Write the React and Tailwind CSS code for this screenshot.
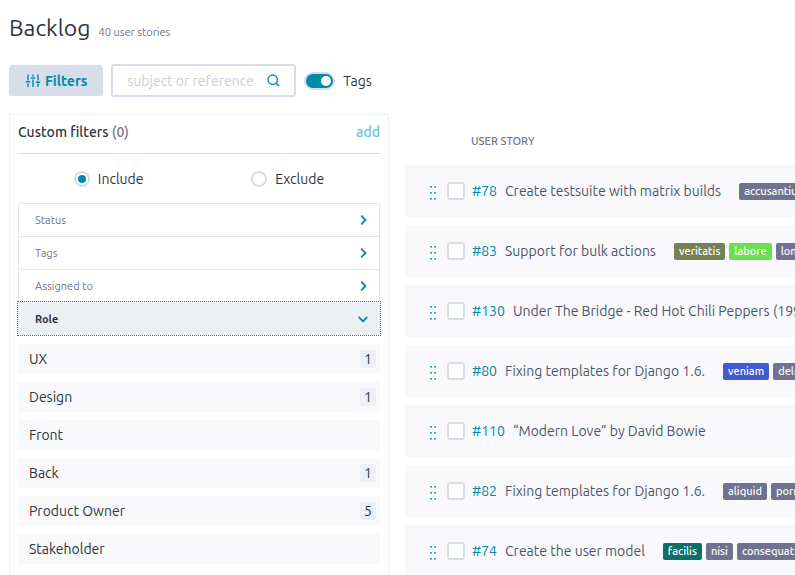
import { useState } from "react";

const GREY = "bg-[#70728f]";

const stories = [
  { id: 78, title: "Create testsuite with matrix builds", tags: [["accusantium", GREY]] },
  { id: 83, title: "Support for bulk actions", tags: [["veritatis", "bg-[#748253]"], ["labore", "bg-[#6ae14c]"], ["longum", GREY]] },
  { id: 130, title: "Under The Bridge - Red Hot Chili Peppers (1991)", tags: [] },
  { id: 80, title: "Fixing templates for Django 1.6.", tags: [["veniam", "bg-[#4159d1]"], ["delectus", GREY]] },
  { id: 110, title: "“Modern Love” by David Bowie", tags: [] },
  { id: 82, title: "Fixing templates for Django 1.6.", tags: [["aliquid", GREY], ["porro", GREY]] },
  { id: 74, title: "Create the user model", tags: [["facilis", "bg-[#0f6e66]"], ["nisi", GREY], ["consequatur", GREY]] },
];

const roles = [
  ["UX", 1],
  ["Design", 1],
  ["Front", 0],
  ["Back", 1],
  ["Product Owner", 5],
  ["Stakeholder", 0],
];

function SlidersIcon() {
  return (
    <svg className="h-4 w-4" viewBox="0 0 16 16" fill="none" stroke="currentColor" strokeWidth="1.4" aria-hidden="true">
      <path d="M3 1.500v6M3 10.500v3.500M.8 8.700h4.400M8 1.500v2M8 6.500v7.500M5.800 5h4.400M13 1.500v6M13 10.500v3.500M10.800 9.200h4.400" />
    </svg>
  );
}

function SearchIcon() {
  return (
    <svg className="h-[13px] w-[13px]" viewBox="0 0 13 13" fill="none" stroke="currentColor" strokeWidth="1.4" aria-hidden="true">
      <circle cx="5.700" cy="5.700" r="4.700" />
      <path d="M9 9l3 3" />
    </svg>
  );
}

function Chevron({ down }) {
  return (
    <svg className="h-3 w-3 text-[#008aa8]" viewBox="0 0 12 12" fill="none" stroke="currentColor" strokeWidth="1.8" aria-hidden="true">
      <path d={down ? "M1.700 4l4.300 4.300L10.300 4" : "M4.200 1.700L8.500 6l-4.300 4.300"} />
    </svg>
  );
}

function DragIcon() {
  return (
    <svg className="h-4 w-[7px] text-[#008aa8]" viewBox="0 0 7 16" fill="currentColor" aria-hidden="true">
      {[1, 7, 13].map((y) => (
        <g key={y}>
          <rect x="0.200" y={y} width="1.600" height="1.600" />
          <rect x="4.200" y={y} width="1.600" height="1.600" />
        </g>
      ))}
    </svg>
  );
}

function Radio({ label, checked, onChange }) {
  return (
    <label className="flex items-center gap-2">
      <input
        type="radio"
        name="mode"
        checked={checked}
        onChange={onChange}
        className="h-4 w-4 appearance-none rounded-full border-2 border-[#d8dee9] bg-white bg-clip-content p-0.5 checked:bg-[#008aa8]"
      />
      {label}
    </label>
  );
}

export default function App() {
  const [mode, setMode] = useState("include");
  const [showTags, setShowTags] = useState(true);

  return (
    <div className="h-screen overflow-hidden bg-white pl-[9px] font-['Ubuntu','Noto_Sans',sans-serif] text-sm text-[#2e3440]">
      <header className="flex items-baseline gap-2 pt-3">
        <h1 className="text-[23px] leading-8">Backlog</h1>
        <span className="text-[11px] text-[#70728f]">40 user stories</span>
      </header>

      <div className="mt-5 flex items-center">
        <button className="flex h-[31px] items-center gap-1 rounded-[3px] bg-[#d8dee9] px-4 font-semibold text-[#008aa8]">
          <SlidersIcon />
          Filters
        </button>
        <label className="ml-2 flex h-[33px] w-[185px] items-center rounded-[3px] border-2 border-[#d8dee9] px-[14px] text-[#008aa8]">
          <input
            type="text"
            aria-label="Search"
            placeholder="subject or reference"
            className="min-w-0 flex-1 text-[#2e3440] outline-none placeholder:text-[#c9cdd5]"
          />
          <SearchIcon />
        </label>
        <label className="ml-2 flex items-center gap-2">
          <span className="relative flex">
            <input
              type="checkbox"
              checked={showTags}
              onChange={() => setShowTags(!showTags)}
              className="peer h-[18px] w-[31px] appearance-none rounded-full border-2 border-[#d8dee9] bg-[#70728f] checked:bg-[#008aa8]"
            />
            <span className="pointer-events-none absolute top-1 left-1 h-2.5 w-2.5 rounded-full bg-white peer-checked:left-[17px]" />
          </span>
          Tags
        </label>
      </div>

      <div className="mt-[17px] flex items-start gap-4">
        <aside className="h-[600px] w-[380px] shrink-0 border border-[#eceff4] px-2">
          <div className="flex h-[39px] items-center justify-between border-b border-[#d8dee9] pb-1">
            <h2 className="font-medium">
              Custom filters <span className="text-[#70728f]">(0)</span>
            </h2>
            <button className="font-medium text-[#6fc1cf]">add</button>
          </div>
          <div className="flex h-[49px] items-center justify-around px-0.5">
            <Radio label="Include" checked={mode === "include"} onChange={() => setMode("include")} />
            <Radio label="Exclude" checked={mode === "exclude"} onChange={() => setMode("exclude")} />
          </div>

          <div className="text-[11px]">
            {["Status", "Tags", "Assigned to"].map((name) => (
              <button
                key={name}
                className="flex h-[33px] w-full items-center justify-between border-x border-t border-[#e2e8ee] pr-[10px] pl-4 text-[#70728f]"
              >
                <span className="pt-0.5">{name}</span>
                <Chevron />
              </button>
            ))}
            <div className="-m-px">
              <button className="flex h-[35px] w-full items-center justify-between border border-dotted border-[#008aa8] bg-[#eceff4] bg-clip-padding pr-[11px] pl-[17px] font-semibold">
                <span className="pt-0.5">Role</span>
                <Chevron down />
              </button>
            </div>
          </div>

          <ul className="mt-[9px] flex flex-col gap-2">
            {roles.map(([name, count]) => (
              <li key={name}>
                <button className="flex h-[30px] w-full items-center justify-between bg-[#f9f9fb] pr-1 pl-[11px]">
                  {name}
                  {count > 0 && (
                    <span className="h-[18px] w-4 rounded-[2px] bg-[#eceff4] text-center leading-[18px]">{count}</span>
                  )}
                </button>
              </li>
            ))}
          </ul>
        </aside>

        <main className="min-w-0 flex-1 overflow-hidden">
          <h2 className="flex h-[51px] items-center pt-1 pl-[66px] text-[11px] font-medium text-[#70728f]">USER STORY</h2>
          <ul className="flex flex-col gap-2">
            {stories.map(({ id, title, tags }) => (
              <li
                key={id}
                className="flex h-[52px] items-center rounded-l-[3px] bg-[#f9f9fb] pl-[25px] whitespace-nowrap text-[#4c566a]"
              >
                <span className="mt-1">
                  <DragIcon />
                </span>
                <input
                  type="checkbox"
                  aria-label={`Select story ${id}`}
                  className="ml-[10px] h-[18px] w-[18px] shrink-0 appearance-none rounded-[3px] border-2 border-[#d8dee9] bg-white checked:bg-[#008aa8]"
                />
                <a href="#story" className="ml-[7px] flex gap-2">
                  <span className="text-[#008aa8]">#{id}</span>
                  <span>{title}</span>
                </a>
                {showTags && (
                  <span className="ml-[18px] flex gap-1">
                    {tags.map(([name, color]) => (
                      <span key={name} className={`h-[17px] rounded-[2px] px-[5px] text-[11px] leading-4 font-medium text-white ${color}`}>
                        {name}
                      </span>
                    ))}
                  </span>
                )}
              </li>
            ))}
          </ul>
        </main>
      </div>
    </div>
  );
}
